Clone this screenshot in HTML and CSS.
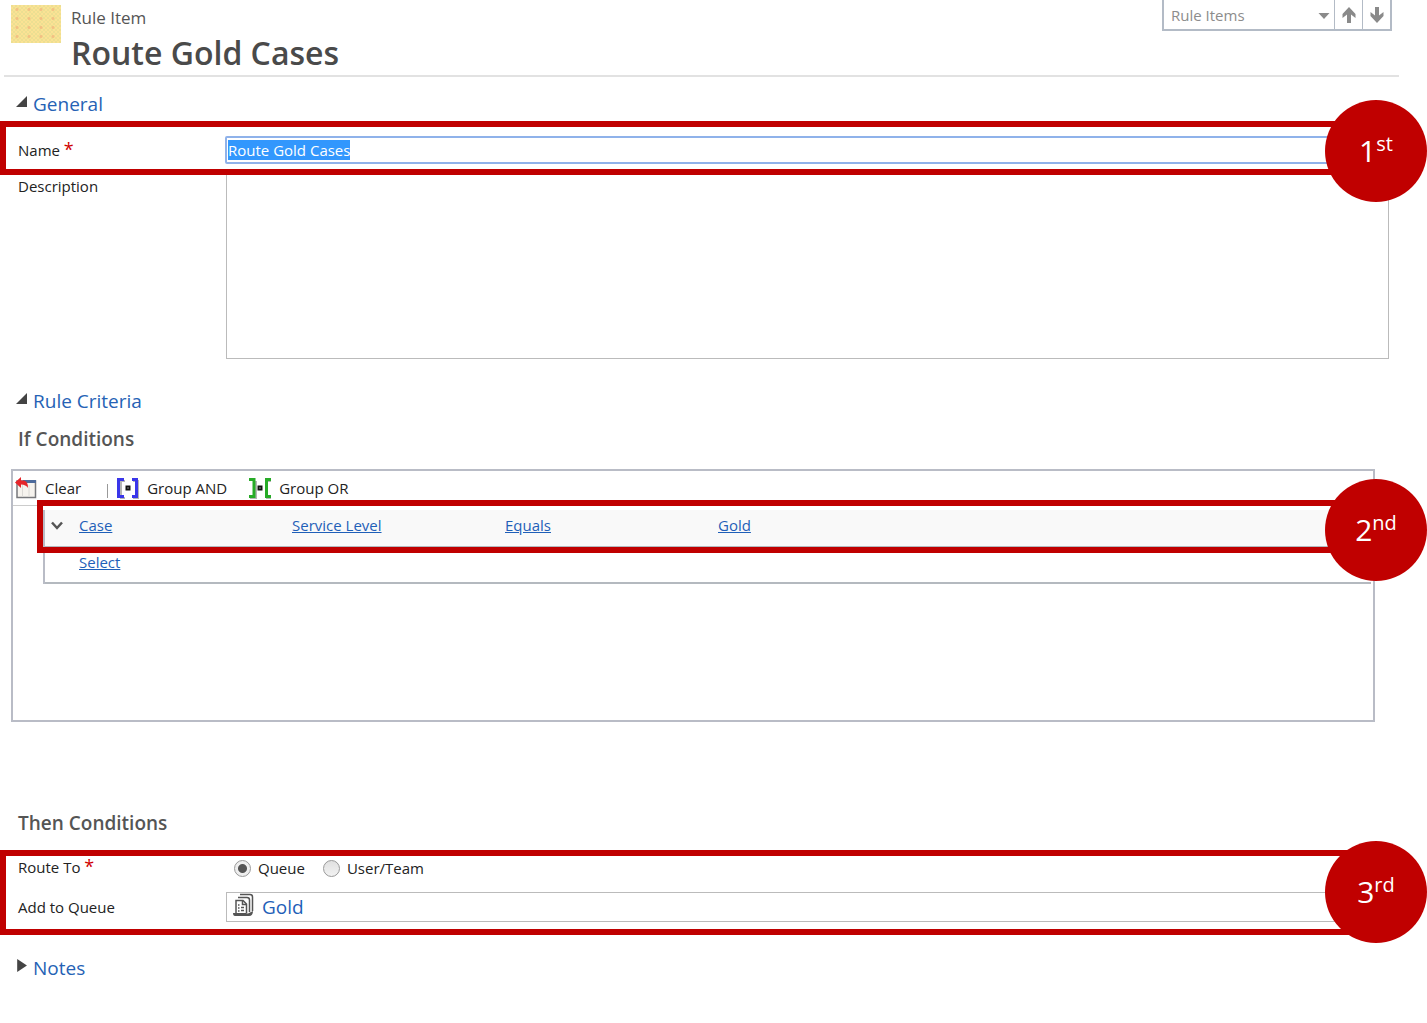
FILE: index.html
```html
<!DOCTYPE html>
<html lang="en">
<head>
<meta charset="utf-8">
<title>Rule Item: Route Gold Cases</title>
<link rel="stylesheet" href="styles.css">
</head>
<body>
<main class="page">
  <header class="header">
    <div class="entity-icon"></div>
    <div class="titles">
      <p class="kind">Rule Item</p>
      <h1>Route Gold Cases</h1>
    </div>
    <nav class="pager" aria-label="Records">
      <select class="pager-select" aria-label="Related records"><option>Rule Items</option></select>
      <svg class="pager-caret" viewBox="0 0 12 6" aria-hidden="true"><path d="M0.500 0H11.500L6 6Z"/></svg>
      <button type="button" class="pager-button" aria-label="Previous record"><svg viewBox="0 0 14 16"><path d="M7 0L13.500 7V11L9 7.500V16H5V7.500L0.500 11V7Z"/></svg></button>
      <button type="button" class="pager-button" aria-label="Next record"><svg viewBox="0 0 14 16"><path d="M7 16L13.500 9V5L9 8.500V0H5V8.500L0.500 5V9Z"/></svg></button>
    </nav>
  </header>

  <section class="section general">
    <h2><svg viewBox="0 0 10 10" aria-hidden="true"><path d="M10 0V10H0Z"/></svg>General</h2>
    <div class="field name-field">
      <label for="name">Name <span class="required">*</span></label>
      <input id="name" class="name-input" type="text" value="Route Gold Cases" required>
      <div class="callout"><span class="badge">1<sup>st</sup></span></div>
    </div>
    <div class="field description-field">
      <label for="description">Description</label>
      <textarea id="description"></textarea>
    </div>
  </section>

  <section class="section criteria">
    <h2><svg viewBox="0 0 10 10" aria-hidden="true"><path d="M10 0V10H0Z"/></svg>Rule Criteria</h2>
    <h3>If Conditions</h3>
    <div class="builder">
      <div class="toolbar">
        <button type="button" class="tool">
          <svg class="tool-icon" viewBox="0 0 22 22" aria-hidden="true">
            <path fill="#f6f3ee" stroke="#77787c" stroke-width="1.500" d="M2 4H20.500V20.500H2Z"/>
            <path fill="#4d6b9c" d="M8 3H21V6H8Z"/>
            <path stroke="#dcdad6" d="M7.500 8V20M14 8V20"/>
            <path fill="#e5252a" d="M0 5.500L6 0V3.500H9Q13 4 13 11Q11 7.500 6 7.500V11Z"/>
          </svg>Clear</button>
        <span class="divider"></span>
        <button type="button" class="tool">
          <svg class="tool-icon" viewBox="0 0 22 22" aria-hidden="true">
            <path fill="none" stroke="#b5b5b5" stroke-width="2" d="M8 4H4V21H8M16 4H21V21H16"/>
            <path fill="none" stroke="#3a36ea" stroke-width="3" d="M7 2.500H1.500V19.500H7M15 2.500H19.500V19.500H15"/>
            <path fill="none" stroke="#111" stroke-width="2" d="M9.500 9.500H12.500V12.500H9.500Z"/>
          </svg>Group AND</button>
        <button type="button" class="tool">
          <svg class="tool-icon" viewBox="0 0 22 22" aria-hidden="true">
            <path fill="none" stroke="#b5b5b5" stroke-width="2" d="M1 21H7V4M22 21H18V4H22"/>
            <path fill="none" stroke="#27ab27" stroke-width="3" d="M0 2.500H5V19.500H0M22 2.500H17.500V19.500H22"/>
            <path fill="none" stroke="#111" stroke-width="2" d="M9.500 9.500H12.500V12.500H9.500Z"/>
          </svg>Group OR</button>
      </div>
      <div class="conditions">
        <div class="condition active">
          <svg class="chevron" viewBox="0 0 12 9" aria-hidden="true"><path d="M1 1.500L6 7L11 1.500"/></svg>
          <a href="#">Case</a><a href="#">Service Level</a><a href="#">Equals</a><a href="#">Gold</a>
          <div class="callout"><span class="badge">2<sup>nd</sup></span></div>
        </div>
        <div class="condition new">
          <a href="#">Select</a>
        </div>
      </div>
    </div>

    <h3>Then Conditions</h3>
    <div class="actions">
      <div class="field route-field" role="radiogroup" aria-labelledby="route">
        <span id="route" class="field-label">Route To <span class="required">*</span></span>
        <div class="choices">
          <label><input type="radio" name="route" checked>Queue</label>
          <label><input type="radio" name="route">User/Team</label>
        </div>
      </div>
      <div class="field queue-field">
        <span class="field-label">Add to Queue</span>
        <div class="lookup">
          <svg viewBox="0 0 21 24" aria-hidden="true">
            <path fill="none" stroke="#555" stroke-width="1.500" d="M7 1.500H17Q19.500 1.500 19.500 4V18M5 4.500H14Q16.500 4.500 16.500 7V19"/>
            <path fill="#fff" stroke="#555" stroke-width="1.500" d="M3 21V7.500H10L13.500 11V20.500"/>
            <path fill="none" stroke="#555" stroke-width="1.500" d="M9.500 8V11.500H13M5 12H6.500M5 15H6.500M5 18H6.500M8 14.500H11M8 17.500H11"/>
            <path fill="#555" d="M0 20H13Q14 21 16 20L20 18Q20 23 16 23H2Q0 23 0 20Z"/>
          </svg>
          <a href="#">Gold</a>
        </div>
      </div>
      <div class="callout"><span class="badge">3<sup>rd</sup></span></div>
    </div>
  </section>

  <section class="section notes">
    <h2><svg viewBox="0 0 10 12" aria-hidden="true"><path d="M1 0L10 6L1 12Z"/></svg>Notes</h2>
  </section>
</main>
<script src="script.js"></script>
</body>
</html>
```
FILE: styles.css
```css
* { box-sizing: border-box; }

body {
  margin: 0;
  background: #fff;
  color: #222;
  font: 15px/24px "Open Sans", "Noto Sans", sans-serif;
}

h1, h2, h3, p { margin: 0; }
a { color: #1f5fb8; }
button, input, select, textarea { font: inherit; color: inherit; }

.page { padding-bottom: 40px; }

.header {
  display: flex;
  align-items: flex-start;
  height: 77px;
  margin: 0 28px 0 4px;
  padding: 0 7px;
  border-bottom: 2px solid #e2e2e2;
}

.entity-icon {
  width: 50px;
  height: 38px;
  margin: 5px 10px 0 0;
  background:
    radial-gradient(circle, #f3c083 1px, transparent 2px) 0 0 / 12px 9px,
    repeating-conic-gradient(#fbe294 0 25%, #ecdf92 0 50%) 0 0 / 4px 4px;
}

.titles { flex: 1; padding-top: 6px; }
.kind { font-size: 17px; color: #555; }
h1 { font-size: 32px; line-height: 46px; font-weight: 600; color: #4a4a4a; }

.pager {
  display: flex;
  position: relative;
  height: 31px;
  border: 2px solid #b3bbc6;
  border-top: 0;
  color: #8c8c8c;
}
.pager-select {
  appearance: none;
  width: 170px;
  padding: 0 7px;
  border: 0;
  background: transparent;
}
.pager-caret { position: absolute; left: 154px; top: 13px; width: 12px; height: 6px; fill: #8a8a8a; }
.pager-button {
  width: 28px;
  padding: 0;
  border: 0;
  border-left: 1px solid #b3bbc6;
  background: transparent;
}
.pager-button svg { display: block; width: 14px; height: 16px; margin: auto; fill: #8a8a8a; }

h2 {
  display: flex;
  align-items: center;
  gap: 6px;
  padding-left: 16px;
  font-size: 19px;
  font-weight: 400;
  color: #2562b5;
}
h2 svg { width: 11px; height: 11px; margin-bottom: 5px; fill: #444; }
h3 { padding-left: 18px; font-size: 19px; font-weight: 600; color: #555; }

.general { padding-top: 15px; }

.field {
  display: grid;
  grid-template-columns: 207px 1fr;
  padding: 0 38px 0 18px;
}
.required { color: #d00000; font-size: 18px; line-height: 16px; }

.name-field {
  position: relative;
  align-items: center;
  height: 42px;
  margin-top: 11px;
  padding-top: 4px;
}
.name-input {
  height: 28px;
  padding: 0 1px;
  border: 2px solid #8fb2ea;
  border-radius: 2px;
  outline: 0;
}
.name-input::selection { background: #3297fd; color: #fff; }

.description-field { margin-top: 5px; }
.description-field textarea {
  height: 185px;
  margin-left: 1px;
  border: 1px solid #bbb;
  outline: 0;
  resize: none;
}

.callout {
  position: absolute;
  z-index: 1;
  inset: -6px 51px -6px 0;
  border: 6px solid #c00000;
  pointer-events: none;
}
.badge {
  position: absolute;
  right: -57px;
  top: calc(50% - 48px);
  width: 102px;
  height: 102px;
  border-radius: 50%;
  background: #c00000;
  color: #fff;
  font: 30px/102px "Open Sans", "Noto Sans", sans-serif;
  text-align: center;
}
.badge sup { font-size: 20px; line-height: 0; }

.criteria { padding-top: 30px; }
.criteria h2 { margin-bottom: 14px; }

.builder {
  height: 253px;
  margin: 18px 52px 89px 11px;
  border: 2px solid #b9bcc6;
}
.toolbar {
  display: flex;
  align-items: center;
  height: 35px;
  padding-left: 2px;
  border-bottom: 1px solid #ccc;
}
.tool {
  display: flex;
  align-items: center;
  gap: 8px;
  margin-right: 22px;
  padding: 0;
  border: 0;
  background: transparent;
}
.tool-icon { width: 22px; height: 22px; }
.divider { width: 1px; height: 14px; margin: 6px 9px 0 4px; background: #999; }

.conditions { margin: 4px 2px 0 30px; border-left: 2px solid #b9bcc6; }
.condition {
  display: grid;
  grid-template-columns: 34px repeat(4, 213px);
  align-items: center;
  border-bottom: 2px solid #b4b9bf;
}
.condition a { justify-self: start; }
.condition.active { position: relative; height: 38px; padding-bottom: 6px; background: #f9f9f9; }
.condition.new { height: 36px; padding-bottom: 6px; }
.condition.new a { grid-column: 2; }
.condition .callout { inset: -10px -5px -7px -8px; }
.chevron { width: 12px; height: 9px; margin-left: 6px; fill: none; stroke: #555; stroke-width: 2.500; }

.actions { position: relative; height: 73px; margin-top: 21px; }
.actions .badge { top: calc(50% - 52px); }
.route-field { height: 36px; }
.field-label { line-height: 22px; }
.queue-field .field-label { align-self: center; }
.choices { display: flex; gap: 18px; margin-left: 9px; }
.choices label { display: flex; align-items: center; gap: 7px; height: 24px; }
.choices input {
  appearance: none;
  width: 17px;
  height: 17px;
  margin: 0;
  border: 1px solid #999;
  border-radius: 50%;
  background: linear-gradient(#e0e0e0, #f2f2f2);
}
.choices input:checked { background: radial-gradient(circle, #555 4px, #eee 5px); }
.lookup {
  display: flex;
  align-items: center;
  gap: 8px;
  height: 30px;
  margin-left: 1px;
  padding-left: 6px;
  border: 1px solid #bbb;
  font-size: 19px;
}
.lookup svg { width: 21px; height: 24px; margin-bottom: 4px; }
.lookup a { text-decoration: none; }

.notes { padding-top: 27px; }
.notes h2 svg { height: 13px; }
```
FILE: script.js
```js
const nameInput = document.getElementById("name");
nameInput.focus();
nameInput.select();
```
